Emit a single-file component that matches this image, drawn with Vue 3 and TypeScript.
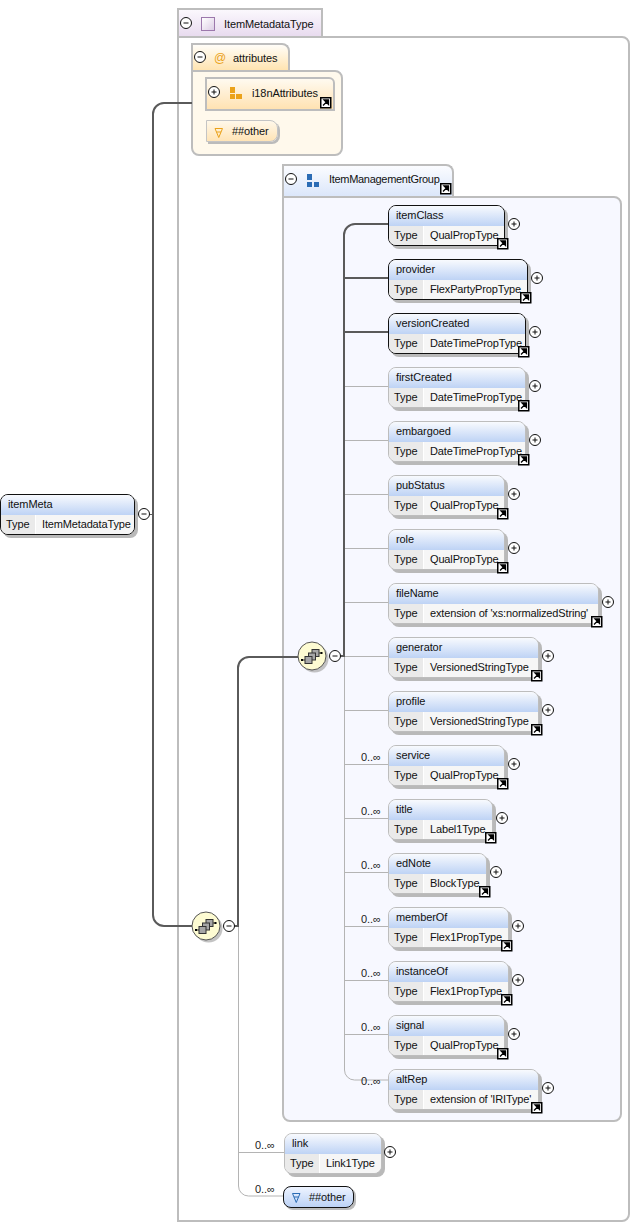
<script setup lang="ts">
interface El { name: string; type: string; right: number; req?: boolean; occ?: string; }
const rows: El[] = [
  { name: 'itemClass', type: 'QualPropType', right: 505, req: true },
  { name: 'provider', type: 'FlexPartyPropType', right: 528, req: true },
  { name: 'versionCreated', type: 'DateTimePropType', right: 526, req: true },
  { name: 'firstCreated', type: 'DateTimePropType', right: 526 },
  { name: 'embargoed', type: 'DateTimePropType', right: 526 },
  { name: 'pubStatus', type: 'QualPropType', right: 505 },
  { name: 'role', type: 'QualPropType', right: 505 },
  { name: 'fileName', type: "extension of 'xs:normalizedString'", right: 599 },
  { name: 'generator', type: 'VersionedStringType', right: 539 },
  { name: 'profile', type: 'VersionedStringType', right: 539 },
  { name: 'service', type: 'QualPropType', right: 505, occ: '0..∞' },
  { name: 'title', type: 'Label1Type', right: 493, occ: '0..∞' },
  { name: 'edNote', type: 'BlockType', right: 487, occ: '0..∞' },
  { name: 'memberOf', type: 'Flex1PropType', right: 509, occ: '0..∞' },
  { name: 'instanceOf', type: 'Flex1PropType', right: 509, occ: '0..∞' },
  { name: 'signal', type: 'QualPropType', right: 505, occ: '0..∞' },
  { name: 'altRep', type: "extension of 'IRIType'", right: 539, occ: '0..∞' },
];
const elements = rows.map((r, i) => ({ ...r, top: 205 + i * 54, cy: 224 + i * 54 }));
const thinRows = elements.slice(3, 16);
const plusIcons = [
  ...elements.map((e) => ({ x: e.right + 9, y: e.cy })),
  { x: 390, y: 1152 },
  { x: 214, y: 92 },
];
const minusIcons = [
  { x: 144, y: 514 }, { x: 229, y: 926 }, { x: 335, y: 656 },
  { x: 186, y: 23 }, { x: 200, y: 57 }, { x: 291, y: 179 },
];
const circles = [{ x: 206, y: 926 }, { x: 312, y: 656 }];
const pos = (left: number, top: number, right: number) => ({
  left: `${left}px`, top: `${top}px`, width: `${right - left}px`,
});
</script>

<template>
  <div class="canvas">
    <div class="tab type-tab"><span class="swatch"></span><span class="tab-label">ItemMetadataType</span></div>
    <div class="panel type-panel"></div>

    <div class="tab attr-tab"><span class="at">@</span><span class="tab-label">attributes</span></div>
    <div class="panel attr-panel"></div>
    <div class="attr-ref">i18nAttributes</div>
    <div class="attr-any">##other</div>

    <div class="tab group-tab"><span class="tab-label">ItemManagementGroup</span></div>
    <div class="panel group-panel"></div>

    <svg class="layer" width="631" height="1223" fill="none">
      <g stroke="#b4b4b4" stroke-width="1">
        <path d="M344.500 656V1070a10 10 0 0 0 10 10H388" />
        <path d="M238.500 926V1186a10 10 0 0 0 10 10H284" />
        <path d="M238.500 1152.500H284" />
        <path v-for="e in thinRows" :key="e.name" :d="`M344.500 ${e.cy + 0.5}H388`" />
      </g>
      <g stroke="#5a5a5a" stroke-width="2">
        <path d="M135 514.500H153" stroke-width="1" />
        <path d="M192 103H164a11 11 0 0 0 -11 11V915a11 11 0 0 0 11 11H192" />
        <path d="M229 926H238V668a11 11 0 0 1 11 -11H298" />
        <path d="M335 656H344V235a11 11 0 0 1 11 -11H388" />
        <path d="M344 278H388M344 332H388" />
      </g>
    </svg>

    <div class="node root" :style="pos(0, 494, 135)">
      <div class="head">itemMeta</div>
      <div class="body"><span class="key">Type</span><span class="val">ItemMetadataType</span></div>
    </div>

    <div
      v-for="e in elements"
      :key="e.name"
      class="node"
      :class="{ req: e.req }"
      :style="pos(388, e.top, e.right)"
    >
      <div class="head">{{ e.name }}</div>
      <div class="body"><span class="key">Type</span><span class="val">{{ e.type }}</span></div>
    </div>
    <template v-for="e in elements" :key="`occ-${e.name}`">
      <span v-if="e.occ" class="occ" :style="{ left: '361px', top: `${e.cy - 13}px` }">{{ e.occ }}</span>
    </template>

    <div class="node" :style="pos(284, 1133, 382)">
      <div class="head">link</div>
      <div class="body"><span class="key">Type</span><span class="val">Link1Type</span></div>
    </div>
    <span class="occ" style="left: 255px; top: 1139px">0..∞</span>
    <span class="occ" style="left: 255px; top: 1183px">0..∞</span>
    <div class="any-blue">##other</div>

    <svg class="layer" width="631" height="1223" fill="none">
      <defs>
        <g id="jump">
          <rect x="0.750" y="0.750" width="10" height="10" fill="#fff" stroke="#000" stroke-width="1.500" />
          <path d="M3 8.500 7 4.500M4 3h4.500v4.500z" stroke="#000" stroke-width="1.300" fill="#000" />
        </g>
        <g id="seq">
          <circle cx="0" cy="0" r="14" fill="#fdfbd2" stroke="#555" stroke-width="1" />
          <path d="M-10 4H-7M7 -3H9" stroke="#222" stroke-width="1" />
          <rect x="0" y="-6.500" width="7" height="7" fill="#a6a6a6" stroke="#333" />
          <rect x="-3.500" y="-3" width="7" height="7" fill="#a6a6a6" stroke="#333" />
          <rect x="-7" y="0.500" width="7" height="7" fill="#a6a6a6" stroke="#333" />
          <rect x="-11" y="3" width="2" height="2" fill="#000" />
          <rect x="8.500" y="-4" width="2" height="2" fill="#000" />
        </g>
      </defs>

      <g v-for="(c, i) in circles" :key="i">
        <circle :cx="c.x + 2.500" :cy="c.y + 2.500" r="14" fill="#aaa" opacity="0.7" />
        <use href="#seq" :x="c.x" :y="c.y" />
      </g>

      <g v-for="(p, i) in plusIcons" :key="`p${i}`" stroke="#111">
        <circle :cx="p.x" :cy="p.y" r="5.500" fill="#fff" />
        <path :d="`M${p.x - 2.500} ${p.y}H${p.x + 2.500}M${p.x} ${p.y - 2.500}V${p.y + 2.500}`" />
      </g>
      <g v-for="(p, i) in minusIcons" :key="`m${i}`" stroke="#111">
        <circle :cx="p.x" :cy="p.y" r="5.500" fill="#fff" />
        <path :d="`M${p.x - 2.500} ${p.y}H${p.x + 2.500}`" />
      </g>

      <g fill="#eba21a">
        <rect x="230" y="87" width="5" height="6" />
        <rect x="230" y="94" width="5" height="5" />
        <rect x="236" y="94" width="6" height="5" />
      </g>
      <g fill="#2b6cb5">
        <rect x="307" y="174" width="5" height="6" />
        <rect x="307" y="182" width="5" height="5" />
        <rect x="314" y="182" width="5" height="5" />
      </g>

      <path d="M215 128.500H222.500L218.750 137.500ZM216.500 132H221" stroke="#eba21a" />
      <path d="M292.500 1193.500H300L296.250 1202.500ZM294 1197H298.500" stroke="#2b6cb5" />

      <use href="#jump" x="320" y="97" />
      <use href="#jump" x="440" y="183" />
      <use v-for="e in elements" :key="`j-${e.name}`" href="#jump" :x="e.right - 8" :y="e.top + 33" />
    </svg>
  </div>
</template>

<style>
html, body { margin: 0; background: #fff; }
</style>

<style scoped>
.canvas {
  position: relative;
  width: 631px;
  height: 1223px;
  overflow: hidden;
  background: #fff;
  font: 11px "Liberation Sans", Arial, sans-serif;
  letter-spacing: -0.1px;
  color: #111;
}
.layer { position: absolute; left: 0; top: 0; pointer-events: none; }
.tab, .panel { position: absolute; box-sizing: border-box; }
.tab { display: flex; align-items: center; }
.tab-label { white-space: nowrap; }

.type-tab {
  left: 177px; top: 8px; width: 146px; height: 30px;
  border: 2px solid #bdbdbd; border-bottom: 0;
  background: linear-gradient(#fbf8fd, #e7d9ee);
  padding-left: 22px;
}
.swatch {
  width: 14px; height: 14px; box-sizing: border-box;
  border: 1px solid #9c78ac;
  background: linear-gradient(135deg, #fff, #dccde5);
  margin-right: 9px;
}
.type-panel {
  left: 177px; top: 36px; width: 453px; height: 1186px;
  border: 2px solid #bdbdbd; border-radius: 0 8px 8px 0;
  background: #fff;
}

.attr-tab {
  left: 191px; top: 43px; width: 99px; height: 28px;
  border: 2px solid #bdbdbd; border-bottom: 0;
  border-radius: 0 8px 0 0;
  background: linear-gradient(#fffdf8, #ffe3ae);
  padding-left: 21px;
}
.at { color: #eba21a; font-size: 12px; margin-right: 7px; }
.attr-panel {
  left: 191px; top: 70px; width: 152px; height: 86px;
  border: 2px solid #bdbdbd; border-radius: 0 8px 8px 8px;
  background: #fff9ec;
}
.attr-ref {
  position: absolute; left: 205px; top: 77px; width: 130px; height: 34px;
  box-sizing: border-box;
  border: 2px solid #bdbdbd; border-radius: 0 6px 0 0;
  background: linear-gradient(#fffaf0, #ffe2b2);
  padding: 8px 0 0 45px;
  white-space: nowrap;
}
.attr-any {
  position: absolute; left: 206px; top: 120px; width: 72px; height: 22px;
  box-sizing: border-box;
  border: 1px solid #c4c4c4; border-radius: 0 8px 8px 0;
  box-shadow: 2px 2px 0 #bbb;
  background: linear-gradient(#fff8ea, #ffe4b6);
  display: flex; align-items: center; padding-left: 25px;
}

.group-tab {
  left: 282px; top: 164px; width: 172px; height: 34px;
  border: 2px solid #bdbdbd; border-bottom: 0;
  border-radius: 0 8px 0 0;
  background: linear-gradient(#fbfcff, #d9e5fa);
  padding: 0 0 6px 45px;
  letter-spacing: -0.3px;
}
.group-panel {
  left: 282px; top: 196px; width: 340px; height: 926px;
  border: 2px solid #bdbdbd; border-radius: 0 8px 8px 8px;
  background: #f7f8ff;
}

.node {
  position: absolute;
  box-sizing: border-box;
  height: 41px;
  border: 1px solid #bdbdbd;
  border-radius: 8px;
  box-shadow: 3px 3px 0 #b9b9b9;
  overflow: hidden;
  background: #efefef;
  white-space: nowrap;
}
.node.req, .node.root { border-color: #111; }
.head {
  height: 20px;
  box-sizing: border-box;
  padding: 3px 0 0 7px;
  background: linear-gradient(#f8fafe, #bed3f5);
}
.body {
  display: flex;
  height: 19px;
  line-height: 17px;
}
.key {
  width: 35px;
  box-sizing: border-box;
  padding: 1px 0 0 5px;
  background: #eaeaea;
  border-right: 1px solid #fff;
}
.val {
  flex: 1;
  padding: 1px 0 0 6px;
  background: #f6f6f6;
  letter-spacing: -0.15px;
}
.occ {
  position: absolute;
  white-space: nowrap;
  color: #222;
  line-height: 12px;
}
.any-blue {
  position: absolute; left: 283px; top: 1186px; width: 71px; height: 22px;
  box-sizing: border-box;
  border: 1px solid #111; border-radius: 8px;
  box-shadow: 2px 2px 0 #bbb;
  background: linear-gradient(#eef4ff, #bcd2f5);
  display: flex; align-items: center; padding-left: 25px;
}
</style>
